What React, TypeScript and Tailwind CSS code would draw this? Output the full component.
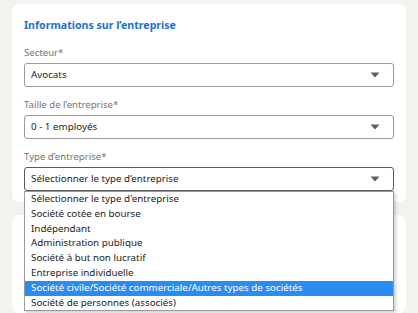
const options = [
  "Sélectionner le type d'entreprise",
  'Société cotée en bourse',
  'Indépendant',
  'Administration publique',
  'Société à but non lucratif',
  'Entreprise individuelle',
  'Société civile/Société commerciale/Autres types de sociétés',
  'Société de personnes (associés)',
]

function Caret() {
  return (
    <svg width="10" height="6" viewBox="0 0 10 6" className="shrink-0">
      <path d="M0.5 0.5 H9.5 L5 5.5 Z" fill="#5f5f5f" />
    </svg>
  )
}

function Field({ label, value, open }: { label: string; value: string; open?: boolean }) {
  return (
    <div className="flex flex-col">
      <span className="text-[9.6px] leading-[16px] text-[#757575]">{label}</span>
      <div className="relative mt-[2px]">
        <div
          className={[
            'h-[24px] flex items-center justify-between pl-[6px] pr-[13px] rounded-[3px] border bg-white',
            open ? 'border-[#5a5a5a]' : 'border-[#9a9a9a]',
          ].join(' ')}
        >
          <span className="text-[9.8px] leading-[16px] text-[#1c1c1c]">{value}</span>
          <Caret />
        </div>
        {open && (
          <ul className="absolute left-0 right-0 top-full z-10 bg-white border border-[#9a9a9a] shadow-[2px_2px_3px_rgba(0,0,0,0.18)]">
            {options.map((o, i) => (
              <li
                key={o}
                className={[
                  'h-[14.8px] leading-[14.8px] pl-[6px] text-[9.8px] whitespace-nowrap',
                  i === 6 ? 'bg-[#2a8cf2] text-white' : 'text-[#1c1c1c]',
                ].join(' ')}
              >
                {o}
              </li>
            ))}
          </ul>
        )}
      </div>
    </div>
  )
}

export default function App() {
  return (
    <div
      className="w-[418px] h-[313px] overflow-hidden bg-[#f3f2ef] px-[12px] pt-[4px] flex flex-col gap-[13px]"
      style={{ fontFamily: '"Noto Sans", sans-serif' }}
    >
      <div className="bg-white rounded-[7px] px-[12px] pt-[12px] pb-[11px] flex flex-col shrink-0">
        <h2 className="text-[10.6px] leading-[18px] font-bold text-[#1b72d2]">Informations sur l’entreprise</h2>
        <div className="mt-[11px] flex flex-col gap-[10px]">
          <Field label="Secteur*" value="Avocats" />
          <Field label="Taille de l’entreprise*" value="0 - 1 employés" />
          <Field label="Type d’entreprise*" value="Sélectionner le type d’entreprise" open />
        </div>
      </div>
      <div className="bg-white rounded-[7px] flex-1" />
    </div>
  )
}
